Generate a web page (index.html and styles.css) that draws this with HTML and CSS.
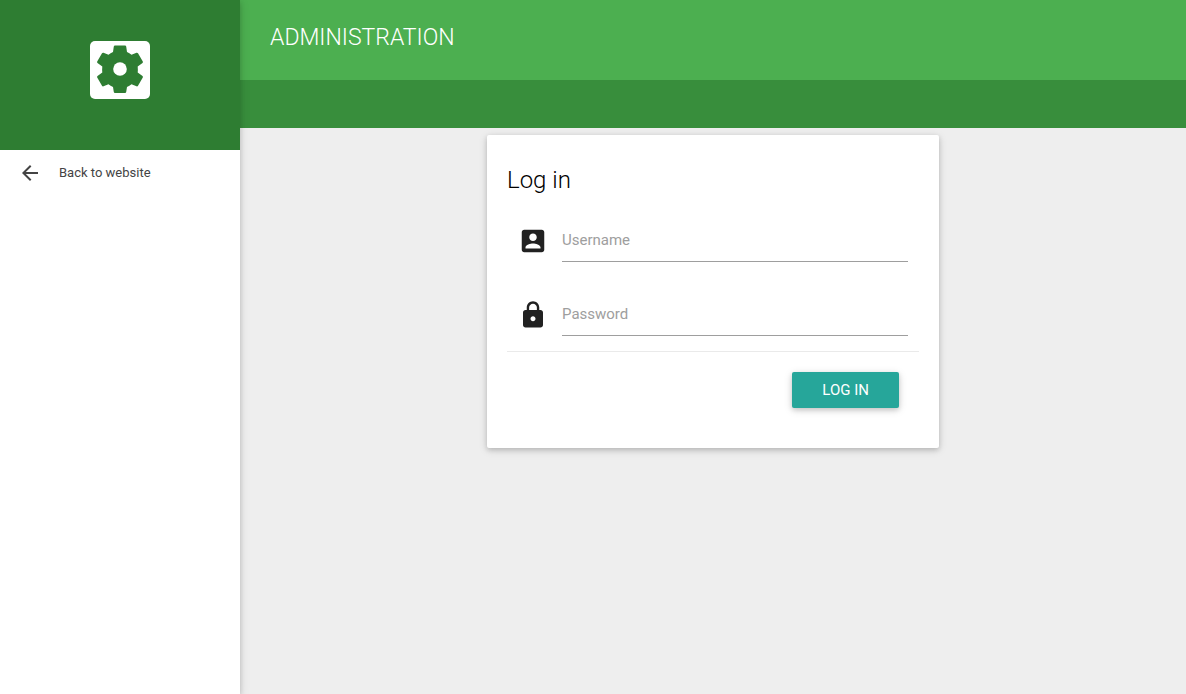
FILE: index.html
```html
<!DOCTYPE html>
<html lang="en">
<head>
  <meta charset="utf-8">
  <meta name="viewport" content="width=device-width, initial-scale=1">
  <title>Administration</title>
  <link rel="stylesheet" href="styles.css">
</head>
<body>
  <aside class="sidebar">
    <div class="brand">
      <svg class="brand-icon" viewBox="-40 -40 80 80" aria-hidden="true">
        <rect x="-30" y="-29" width="60" height="58" rx="5" fill="#fff"/>
        <path fill="#2e7d32" d="M-5-24.500H5Q6-24.500 6.200-23.500L7-18Q9.500-17 11.500-15.200L16.500-17.300Q17.500-17.600 18-16.700L22.800-8.500Q23.200-7.600 22.500-7L17.700-3.500Q18-.5 17.700 2.500L22.500 6Q23.200 6.600 22.800 7.500L18 15.700Q17.500 16.600 16.500 16.300L11.500 14.200Q9.500 16 7 17L6.200 22Q6 23 5 23H-5Q-6 23-6.200 22L-7 17Q-9.500 16-11.500 14.200L-16.500 16.300Q-17.500 16.600-18 15.700L-22.800 7.500Q-23.200 6.600-22.500 6L-17.700 2.500Q-18-.5-17.700-3.500L-22.500-7Q-23.200-7.600-22.800-8.500L-18-16.700Q-17.500-17.600-16.500-17.300L-11.500-15.200Q-9.500-17-7-18L-6.200-23.500Q-6-24.500-5-24.500Z"/>
        <circle cy="-1" r="6.800" fill="#fff"/>
      </svg>
    </div>
    <nav>
      <a class="nav-link" href="#">
        <svg class="nav-icon" viewBox="0 0 24 24" aria-hidden="true"><path fill="currentColor" d="M20 11H7.830l5.590-5.590L12 4l-8 8 8 8 1.410-1.410L7.830 13H20v-2z"/></svg>
        <span>Back to website</span>
      </a>
    </nav>
  </aside>
  <div class="page">
    <header class="header">
      <h1 class="header-title">ADMINISTRATION</h1>
    </header>
    <div class="toolbar"></div>
    <main class="main">
      <form class="card">
        <h2 class="card-title">Log in</h2>
        <div class="field">
          <svg class="field-icon" viewBox="0 0 24 24" aria-hidden="true"><path fill="currentColor" d="M3 5v14c0 1.100.890 2 2 2h14c1.100 0 2-.9 2-2V5c0-1.100-.9-2-2-2H5c-1.110 0-2 .9-2 2zm12 4c0 1.660-1.340 3-3 3s-3-1.340-3-3 1.340-3 3-3 3 1.340 3 3zm-9 8c0-2 4-3.100 6-3.100s6 1.100 6 3.100v1H6v-1z"/></svg>
          <input class="field-input" type="text" name="username" placeholder="Username" aria-label="Username">
        </div>
        <div class="field">
          <svg class="field-icon" viewBox="0 0 24 24" aria-hidden="true"><path fill="currentColor" d="M18 8h-1V6c0-2.760-2.240-5-5-5S7 3.240 7 6v2H6c-1.100 0-2 .9-2 2v10c0 1.100.9 2 2 2h12c1.100 0 2-.9 2-2V10c0-1.100-.9-2-2-2zm-6 9c-1.100 0-2-.9-2-2s.9-2 2-2 2 .9 2 2-.9 2-2 2zm3.100-9H8.900V6c0-1.710 1.390-3.100 3.100-3.100s3.100 1.390 3.100 3.100v2z"/></svg>
          <input class="field-input" type="password" name="password" placeholder="Password" aria-label="Password">
        </div>
        <div class="card-actions">
          <button class="button" type="submit">LOG IN</button>
        </div>
      </form>
    </main>
  </div>
</body>
</html>
```

FILE: styles.css
```css
*, *::before, *::after {
  box-sizing: border-box;
}

body {
  display: flex;
  min-height: 100vh;
  margin: 0;
  background: #eee;
  color: rgba(0, 0, 0, 0.87);
  font-family: Roboto, sans-serif;
  font-size: 15px;
}

.sidebar {
  position: relative;
  z-index: 1;
  flex: 0 0 240px;
  background: #fff;
  box-shadow: 0 2px 5px 0 rgba(0, 0, 0, 0.16), 0 2px 10px 0 rgba(0, 0, 0, 0.12);
}

.brand {
  display: flex;
  justify-content: center;
  padding: 30px 0 40px;
  background: #2e7d32;
}

.brand-icon {
  width: 80px;
  height: 80px;
}

.nav-link {
  display: flex;
  align-items: center;
  gap: 17px;
  padding: 0 18px;
  color: #444;
  font-size: 13px;
  font-weight: 400;
  line-height: 45px;
  text-decoration: none;
}

.nav-icon {
  width: 24px;
  height: 24px;
}

.page {
  flex: 1;
  min-width: 0;
}

.header {
  height: 80px;
  padding: 0 30px;
  background: #4caf50;
  color: #fff;
}

.header-title {
  margin: 0;
  padding-top: 22px;
  font-size: 23px;
  font-weight: 300;
  line-height: 32px;
}

.toolbar {
  height: 48px;
  background: #388e3c;
}

.main {
  display: flex;
  justify-content: center;
  padding: 7px 0;
}

.card {
  width: calc(50% - 21px);
  min-width: 300px;
  padding: 20px 20px 40px;
  border-radius: 2px;
  background: #fff;
  box-shadow: 0 2px 5px 0 rgba(0, 0, 0, 0.16), 0 2px 10px 0 rgba(0, 0, 0, 0.12);
}

.card-title {
  margin: 0;
  color: #000;
  font-size: 24px;
  font-weight: 300;
  line-height: 50px;
}

.field {
  display: flex;
  align-items: flex-start;
  gap: 14px;
  height: 74px;
  padding: 13px 11px 0;
}

.field-icon {
  flex: none;
  width: 30px;
  height: 30px;
  margin-top: 8px;
}

.field-input {
  flex: 1;
  min-width: 0;
  height: 44px;
  padding: 0;
  border: 0;
  border-bottom: 1px solid #9e9e9e;
  outline: none;
  background: transparent;
  color: inherit;
  font: inherit;
}

.field-input::placeholder {
  color: #9e9e9e;
  opacity: 1;
}

.card-actions {
  display: flex;
  justify-content: flex-end;
  margin-top: -2px;
  padding: 20px 20px 0;
  border-top: 1px solid #eaeaea;
}

.button {
  height: 36px;
  padding: 0 30px;
  border: 0;
  border-radius: 2px;
  background: #26a69a;
  box-shadow: 0 2px 5px 0 rgba(0, 0, 0, 0.16), 0 2px 10px 0 rgba(0, 0, 0, 0.12);
  color: #fff;
  font: 400 15px/36px Roboto, sans-serif;
  cursor: pointer;
}
```
